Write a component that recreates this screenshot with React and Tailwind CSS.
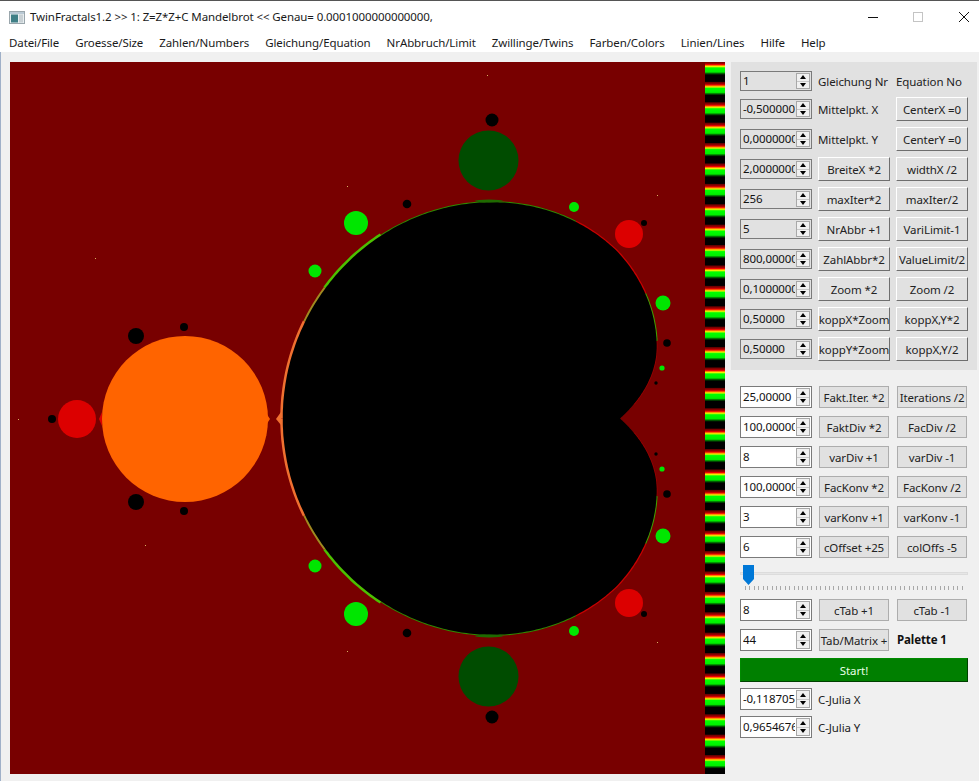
import React from "react";

const FONT = { fontFamily: '"Noto Sans", "Open Sans", sans-serif' };

const circles = [
  [77, 419, 19, "#dc0000"], [185, 419, 83, "#ff6400"], [52, 419, 4, "#000"],
  [136, 336, 8, "#000"], [184, 327, 4, "#000"], [136, 502, 8, "#000"], [184, 511, 4, "#000"],
  [488.5, 160.5, 30, "#004c00"], [488.5, 676.5, 30, "#004c00"], [492, 120, 6.5, "#000"], [492, 717, 6.5, "#000"],
  [356, 223, 12, "#00e600"], [356, 614, 12, "#00e600"], [315, 271, 6.5, "#00e600"], [315, 566, 6.5, "#00e600"],
  [407, 204, 4.3, "#000"], [407, 633, 4.3, "#000"], [574, 207, 5, "#00e600"], [574, 631, 5, "#00e600"],
  [629, 234, 14, "#dc0000"], [629, 603, 14, "#dc0000"], [644, 223, 3, "#000"], [644, 614, 3, "#000"],
  [663, 303, 7.5, "#00e600"], [663, 536, 7.5, "#00e600"], [667, 343, 3.8, "#000"], [667, 494, 3.8, "#000"],
  [662, 368, 2.6, "#00e600"], [662, 469, 2.6, "#00e600"], [656, 383, 1.7, "#000"], [656, 454, 1.7, "#000"],
];

const specks = [[487, 75], [347, 186], [657, 195], [95, 258], [145, 545], [18, 419], [347, 651], [657, 642]];

const cubic = (a, b, c, d, u) => {
  const v = 1 - u;
  return v * v * v * a + 3 * v * v * u * b + 3 * v * u * u * c + u * u * u * d;
};

const pt = (t0, sign = 1) => {
  const t = t0 > Math.PI ? 2 * Math.PI - t0 : t0;
  const s = t0 > Math.PI ? -sign : sign;
  if (t < Math.PI / 3) {
    const u = t / (Math.PI / 3);
    const dy = cubic(0, 13.5, 38.5, 72, u);
    return `${cubic(620, 635, 656.7, 656.7, u).toFixed(1)},${(418.5 - s * dy).toFixed(1)}`;
  }
  const re = Math.cos(t) / 2 - Math.cos(2 * t) / 4;
  const im = Math.sin(t) / 2 - Math.sin(2 * t) / 4;
  let x = 534 + 335 * re;
  if (re > 0.25) x = 617.75 + (re - 0.25) * 335 * 0.93;
  return `${x.toFixed(1)},${(418.5 - s * 333 * im).toFixed(1)}`;
};
const arc = (a, b, sign = 1) => {
  const out = [];
  const n = Math.max(4, Math.round((b - a) * 80));
  for (let i = 0; i <= n; i++) out.push(pt(a + ((b - a) * i) / n, sign));
  return out.join(" ");
};
const body = (() => {
  const out = [];
  for (let i = 0; i <= 720; i++) out.push(pt((i / 720) * Math.PI * 2));
  return out.join(" ");
})();

const rims = [
  [0.3, 1.08, "#9c0000", 1.5],
  [1.08, 1.34, "#3fa000", 2],
  [1.34, 1.78, "#c80000", 2.5],
  [1.78, 2.48, "#2f8a00", 2],
  [2.48, 2.72, "#4cc000", 5],
  [2.72, 2.84, "#a08a20", 4],
  [2.84, 3.1416, "#f07030", 5],
];

function Fractal() {
  return (
    <svg viewBox="10 62 695 712" className="block h-[712px] w-[695px] shrink-0 bg-[#780000]">
      {rims.map(([a, b, c, w]) => (
        <React.Fragment key={a}>
          <polyline points={arc(a, b, 1)} fill="none" stroke={c} strokeWidth={w} />
          <polyline points={arc(a, b, -1)} fill="none" stroke={c} strokeWidth={w} />
        </React.Fragment>
      ))}
      <polygon points={body} fill="#000" />
      <polygon points="276,419 281,412 281,425" fill="#f07030" />
      <polygon points="266,413 270,419 266,425" fill="#ff6400" />
      <polygon points="102,412 99,419 102,426" fill="#dc0000" />
      <ellipse cx="489" cy="201" rx="14" ry="1.5" fill="#1f6a00" />
      <ellipse cx="489" cy="636" rx="14" ry="1.5" fill="#1f6a00" />
      {circles.map(([x, y, r, c], i) => (
        <circle key={i} cx={x} cy={y} r={r} fill={c} />
      ))}
      {specks.map(([x, y]) => (
        <rect key={`${x}-${y}`} x={x} y={y} width="1" height="1" fill="#d8b060" />
      ))}
    </svg>
  );
}

function Spin({ value, flat }) {
  return (
    <div
      className={`flex w-[72px] shrink-0 items-center border border-[#7a7a7a] pl-[2px] pr-[1px] ${
        flat ? "h-5 bg-[#e1e1e1]" : "h-[22px] border-[1.5px] bg-white"
      }`}
    >
      <span className="min-w-0 flex-1 overflow-hidden whitespace-nowrap leading-[18px] text-[#111]">{value}</span>
      <span className={`ml-[1px] flex w-[14px] shrink-0 flex-col border border-[#a8a8a8] bg-[#f0f0f0] ${flat ? "h-4" : "h-[18px]"}`}>
        <span className="flex flex-1 items-center justify-center border-b border-[#c8c8c8]">
          <span className="h-0 w-0 border-x-[3.5px] border-b-[4px] border-x-transparent border-b-black" />
        </span>
        <span className="flex flex-1 items-center justify-center">
          <span className="h-0 w-0 border-x-[3.5px] border-t-[4px] border-x-transparent border-t-black" />
        </span>
      </span>
    </div>
  );
}

function Raised({ children }) {
  return (
    <div className="flex h-6 w-[72px] shrink-0 items-center justify-center overflow-hidden whitespace-nowrap border-[1.5px] border-b-[#6e6e6e] border-l-white border-r-[#6e6e6e] border-t-white bg-[#e1e1e1] pt-[1px] text-[#222]">
      {children}
    </div>
  );
}

function Flat({ children }) {
  return (
    <div className="flex h-[22px] w-[70px] shrink-0 items-center justify-center overflow-hidden whitespace-nowrap border border-[#adadad] bg-[#e1e1e1] pt-[1px] text-[#222]">
      {children}
    </div>
  );
}

function TopRow({ value, left, right, labelLeft }) {
  return (
    <div className="flex h-6 items-center gap-[6px]">
      <Spin value={value} flat />
      {labelLeft ? <span className="w-[72px] shrink-0 whitespace-nowrap pt-[1px] text-[#222]">{left}</span> : <Raised>{left}</Raised>}
      <Raised>{right}</Raised>
    </div>
  );
}

function LowRow({ value, a, b }) {
  return (
    <div className="flex h-[22px] items-center">
      <Spin value={value} />
      <div className="ml-[7px]"><Flat>{a}</Flat></div>
      <div className="ml-[8px]">{typeof b === "string" ? <Flat>{b}</Flat> : b}</div>
    </div>
  );
}

const menu = [
  "Datei/File", "Groesse/Size", "Zahlen/Numbers", "Gleichung/Equation", "NrAbbruch/Limit",
  "Zwillinge/Twins", "Farben/Colors", "Linien/Lines", "Hilfe", "Help",
];

const topRows = [
  ["-0,5000000", "Mittelpkt. X", "CenterX =0", true],
  ["0,0000000", "Mittelpkt. Y", "CenterY =0", true],
  ["2,0000000", "BreiteX *2", "widthX /2"],
  ["256", "maxIter*2", "maxIter/2"],
  ["5", "NrAbbr +1", "VariLimit-1"],
  ["800,00000", "ZahlAbbr*2", "ValueLimit/2"],
  ["0,1000000", "Zoom *2", "Zoom /2"],
  ["0,50000", "koppX*Zoom", "koppX,Y*2"],
  ["0,50000", "koppY*Zoom", "koppX,Y/2"],
];

const lowRows = [
  ["25,00000", "Fakt.Iter. *2", "Iterations /2"],
  ["100,00000", "FaktDiv *2", "FacDiv /2"],
  ["8", "varDiv +1", "varDiv -1"],
  ["100,00000", "FacKonv *2", "FacKonv /2"],
  ["3", "varKonv +1", "varKonv -1"],
  ["6", "cOffset +25", "colOffs -5"],
];

export default function App() {
  return (
    <div style={FONT} className="flex h-[781px] w-[979px] flex-col overflow-hidden border-t border-[#555] bg-[#f0f0f0] text-[11.5px] leading-none tracking-[-0.1px]">
      <div className="flex h-8 shrink-0 items-center bg-white pl-[9px] text-[#1a1a1a]">
        <svg width="16" height="13" viewBox="0 0 16 13" className="mr-[5px] shrink-0">
          <rect x="0.5" y="0.5" width="15" height="12" fill="#e8eef0" stroke="#9aa6ac" />
          <rect x="1" y="1" width="14" height="2" fill="#b9c9d4" />
          <rect x="2" y="3.5" width="7" height="8" fill="#3f7f86" />
          <rect x="10" y="3.5" width="4" height="8" fill="#c8d0d4" />
        </svg>
        <span className="whitespace-nowrap">TwinFractals1.2 &gt;&gt; 1: Z=Z*Z+C Mandelbrot &lt;&lt; Genau= 0.0001000000000000,</span>
        <div className="ml-auto flex items-center pr-[10px]">
          <svg width="10" height="10" viewBox="0 0 10 10" className="mr-[35px]"><path d="M0 5.5H10" stroke="#111" /></svg>
          <svg width="10" height="10" viewBox="0 0 10 10" className="mr-[36px]"><rect x="0.5" y="0.5" width="9" height="9" fill="none" stroke="#c4c4c4" /></svg>
          <svg width="10" height="10" viewBox="0 0 10 10"><path d="M0 0L10 10M10 0L0 10" stroke="#111" /></svg>
        </div>
      </div>
      <div className="flex h-[19px] shrink-0 items-center gap-4 bg-white pl-[9px] pt-[1px] text-[#1a1a1a]">
        {menu.map((m) => (
          <span key={m} className="whitespace-nowrap">{m}</span>
        ))}
      </div>
      <div className="flex min-h-0 flex-1 items-start border-l border-[#9fb0c8] pl-[9px] pt-[10px]">
        <Fractal />
        <div className="h-[712px] w-5 shrink-0 bg-[repeating-linear-gradient(180deg,#700000_0px,#a00000_1.5px,#f00000_2.5px,#ff8000_3.5px,#f0f000_4.5px,#00ff00_6px,#00f000_10px,#006000_11.5px,#000000_13px,#000000_19.4px,#700000_20.4px)]" />
        <div className="ml-[6px] flex w-[246px] shrink-0 flex-col">
          <div className="flex flex-col gap-[6px] bg-[#e1e1e1] p-[9px] pr-0">
            <div className="flex h-5 items-center gap-[6px]">
              <Spin value="1" flat />
              <span className="w-[72px] shrink-0 whitespace-nowrap pt-[1px] text-[#222]">Gleichung Nr</span>
              <span className="w-[72px] shrink-0 whitespace-nowrap pt-[1px] text-[#222]">Equation No</span>
            </div>
            {topRows.map(([v, l, r, lab]) => (
              <TopRow key={l} value={v} left={l} right={r} labelLeft={lab} />
            ))}
          </div>
          <div className="mt-4 flex flex-col gap-2 pl-[9px]">
            {lowRows.map(([v, a, b]) => (
              <LowRow key={a} value={v} a={a} b={b} />
            ))}
          </div>
          <div className="relative ml-[9px] h-[41px] w-[228px]">
            <div className="absolute left-0 right-0 top-[14px] h-[3px] border border-[#dcdcdc] bg-[#e6e6e6]" />
            <svg width="11" height="20" viewBox="0 0 11 20" className="absolute left-[3px] top-[7px]">
              <path d="M0 0H11V14L5.5 20L0 14Z" fill="#0078d7" />
            </svg>
            <div className="absolute left-[5px] top-[28px] flex h-1 w-[218px] justify-between">
              {Array.from({ length: 50 }, (_, i) => (
                <span key={i} className="h-full w-[1px] bg-[#a8a8a8]" />
              ))}
            </div>
          </div>
          <div className="flex flex-col gap-2 pl-[9px]">
            <LowRow value="8" a="cTab +1" b="cTab -1" />
            <LowRow value="44" a="Tab/Matrix +" b={<span className="whitespace-nowrap pt-[1px] font-bold text-[#111]">Palette 1</span>} />
          </div>
          <div className="ml-[9px] mt-[7px] flex h-6 w-[228px] items-center justify-center border-[1.5px] border-b-[#004000] border-l-[#008a00] border-r-[#004000] border-t-[#008a00] bg-[#007f00] pt-[1px] text-[#e8ffe8]">
            Start!
          </div>
          <div className="mt-[6px] flex flex-col gap-[6px] pl-[9px]">
            {[["-0,1187056", "C-Julia X"], ["0,9654676", "C-Julia Y"]].map(([v, l]) => (
              <div key={l} className="flex h-[22px] items-center gap-[6px]">
                <Spin value={v} />
                <span className="whitespace-nowrap pt-[1px] text-[#222]">{l}</span>
              </div>
            ))}
          </div>
        </div>
      </div>
    </div>
  );
}
